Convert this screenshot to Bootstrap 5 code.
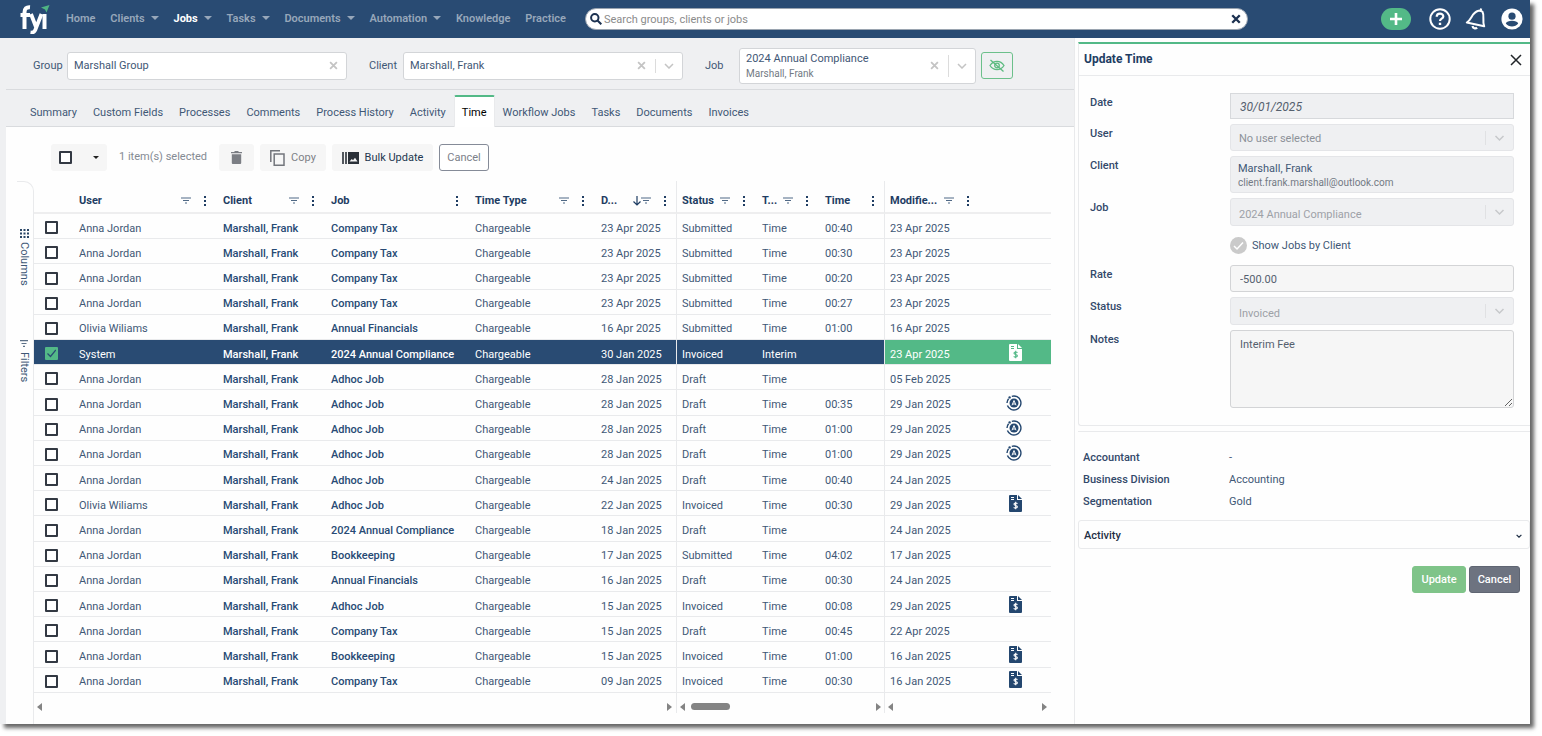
<!DOCTYPE html>
<html lang="en">
<head>
<meta charset="utf-8">
<meta name="viewport" content="width=device-width, initial-scale=1">
<title>FYI - Jobs - Time</title>
<link href="https://cdn.jsdelivr.net/npm/bootstrap@5.3.0/dist/css/bootstrap.min.css" rel="stylesheet">
<style>
  :root { --navy:#294b73; --ink:#3f5876; --deep:#1f3d63; --green:#53b987; --line:#e9eaec; --bar:#eff0f2; }
  body { font-family:Roboto,"Open Sans",sans-serif; font-size:11px; line-height:16px; color:var(--ink); background:#fff; }
  button, input, select, textarea { font-family:inherit; font-size:inherit; line-height:inherit; color:inherit; }
  svg { display:block; flex:none; }
  .window { min-height:calc(100vh - 12px); margin:0 12px 12px 0; background:#fefefe; box-shadow:4px 4px 4px rgba(0,0,0,.6); }

  .topbar { height:38px; background:var(--navy); padding:0 7px 0 20px; }
  .topbar .nav-link { font-weight:600; color:#97a7ba; padding:0; white-space:nowrap; }
  .topbar .nav-link.active { color:#fff; font-weight:700; }
  .topbar .has-menu::after { content:""; display:inline-block; margin-left:6px; vertical-align:2px; border:4px solid transparent; border-top-color:#97a7ba; border-bottom:0; }
  .main-menu { flex:0 0 535px; padding:0 19px 0 16px; }
  .search { height:22px; border-radius:11px; background:#fff; color:#1c3150; border:1px solid #9aa4b0; padding:0 6px 0 4px; }
  .search input { border:0; outline:0; background:none; min-width:0; padding:1px 2px 0; color:#555; }
  .search input::placeholder { color:#8b8b8b; opacity:1; }
  .plain-btn { border:0; background:none; padding:0; color:inherit; display:flex; align-items:center; }
  .add-btn { width:30px; height:22px; border-radius:11px; background:var(--green); justify-content:center; }
  .user-tools { flex:0 0 275px; gap:14px; color:#fff; }

  .gutter { flex:0 0 6px; background:var(--bar); }
  .context { height:52px; margin-left:6px; border-bottom:1px solid #d9dbde; padding:4px 0 0 27px; }
  .context-wrap, .tabs-wrap { background:var(--bar); }
  .pick-cap { flex:0 0 34px; }
  .pick-cap.next { margin-left:22px; }
  .picker { flex:none; height:28px; background:#fff; border:1px solid #d3d5d8; border-radius:3px; padding:0 8px 0 6px; color:#c4c4c4; }
  .picker input { border:0; outline:0; min-width:0; padding:0; color:var(--ink); background:none; }
  .picker .split { width:1px; align-self:stretch; margin:6px 8px 6px 9px; background:#dcdcdc; }
  .w-pick { width:280px; }
  .job-pick { width:237px; height:36px; line-height:15px; }
  .job-name { color:var(--ink); }
  .sub { color:#737a84; font-size:10px; }
  .hide-btn { width:32px; height:27px; margin-left:5px; border:1px solid #6cc08b; border-radius:3px; color:#5dbb80; justify-content:center; }
  .tabs { height:37px; margin-left:6px; padding-left:16px; border-bottom:1px solid #d9dbde; }
  .tabs .nav-link { height:32px; padding:10px 8px 0; margin:0 0 -1px; color:var(--ink); border:0; border-radius:0; line-height:16px; white-space:nowrap; }
  .tabs .nav-link.active { background:#fff; border:1px solid var(--line); border-top:2px solid var(--green); border-bottom:0; border-radius:2px 2px 0 0; padding:8px 7px 0; }

  .tools { padding:17px 0 0 45px; height:54px; gap:6px; }
  .tool { height:27px; border:0; border-radius:3px; background:#f6f6f6; color:#7e8186; padding:0; display:flex; align-items:center; justify-content:center; gap:6px; white-space:nowrap; }
  .tool.dark { color:#23364f; width:101px; }
  .tool.outline { background:#fff; border:1px solid #858b98; color:#7b8089; width:50px; }
  .tool.sel { width:56px; padding:0 8px; justify-content:space-between; }
  .tool.trash { width:35px; }
  .tool.copy { width:66px; }
  .sel-text { width:100px; padding:5px 0 0 6px; white-space:nowrap; color:#848a93; }
  .box { appearance:none; display:block; width:13px; height:13px; margin:0; border:2px solid #333943; border-radius:1px; background:#fff; flex:none; }
  .box:checked { border-color:var(--green); background:var(--green) url("data:image/svg+xml,%3Csvg xmlns='http://www.w3.org/2000/svg' viewBox='0 0 9 9'%3E%3Cpath d='M.5 4.5L3.5 7.5 8.8 1' fill='none' stroke='%23294b73' stroke-width='1.2'/%3E%3C/svg%3E") center/9px no-repeat; }

  .rail { flex:0 0 17px; margin-left:11px; border:1px solid var(--line); border-left:0; border-bottom:0; border-top-right-radius:10px; padding-top:47px; }
  .rail button { writing-mode:vertical-rl; gap:4px; font-size:11px; padding:0; line-height:14px; }
  .rail button + button { margin-top:54px; }
  .times { table-layout:fixed; width:100%; border-collapse:separate; border-spacing:0; }
  .times th { height:33px; padding:9px 8px 0 7px; color:var(--deep); font-weight:700; border-bottom:2px solid #eeeeef; white-space:nowrap; }
  .times td { padding:5px 0 0 7px; border-bottom:1px solid var(--line); white-space:nowrap; overflow:hidden; line-height:16px; }
  .times .pin { border-left:1px solid var(--line); padding-left:5px; }
  .times .box { margin-left:4px; }
  .times td:first-child { padding-top:3px; }
  .times .mark-cell { padding:0 9px 0 0; }
  .times .mark-cell svg { margin-left:auto; margin-right:20px; color:#24476f; }
  .times a { color:#274a74; font-weight:500; text-decoration:none; }
  .times .picked td { background:var(--navy); color:#fff; }
  .times .picked .late { background:var(--green); }
  .times .picked a, .times .picked .mark-cell svg { color:#fff; }
  .c-box{width:38px}.c-client{width:108px}.c-job{width:144px}.c-type{width:126px}.c-date{width:82px}
  .c-status{width:79px}.c-kind{width:63px}.c-time{width:66px}.c-mod{width:95px}.c-icon{width:72px}
  .head-in { display:flex; align-items:center; }
  .head-in .menu-dots { margin-left:11px; }
  .scrolls { height:20px; margin-bottom:11px; color:#848484; }
  .scrolls > div { display:flex; align-items:center; justify-content:space-between; padding:7px 4px 0 3px; }
  .scrolls .mid { width:208px; border-left:1px solid var(--line); padding-right:3px; }
  .scrolls .end { width:167px; border-left:1px solid var(--line); }
  .thumb { width:39px; height:7px; border-radius:4px; background:#848484; margin:0 auto 0 5px; }
  .table-zone { margin-right:23px; }

  .side { flex:0 0 456px; border-left:1px solid var(--line); padding:4px 0 0 3px; }
  .side-card { border-top:2px solid var(--green); border-left:1px solid var(--line); border-bottom:1px solid var(--line); border-bottom-left-radius:3px; }
  .side-head { height:32px; padding:0 8px 0 5px; border-bottom:1px solid var(--line); }
  .side-head h2 { font-size:12px; font-weight:700; color:var(--deep); margin:0; }
  .fields { display:grid; grid-template-columns:140px 1fr; gap:5px 0; padding:17px 16px 17px 11px; }
  .fields .cap { font-weight:500; color:#33496a; line-height:20px; }
  .fld { width:100%; height:27px; display:block; border:1px solid #e4e5e8; border-radius:3px; background:var(--bar); padding:2px 9px 0; color:#55606e; opacity:1; }
  .fld.date { height:26px; font-style:italic; border:1px solid #d7d9dc; border-radius:0; font-size:12px; }
  .fld.soft { background:#f6f6f6; border-color:#d3d4d6; }
  select.fld { appearance:none; padding:2px 8px 0; color:#8d9299; background:var(--bar) url("data:image/svg+xml,%3Csvg xmlns='http://www.w3.org/2000/svg' width='28' height='14'%3E%3Cpath d='M.5 0V14' stroke='%23e0e1e3'/%3E%3Cpath d='M10.500 5L14.500 9 18.500 5' fill='none' stroke='%23c6c8cb' stroke-width='1.500'/%3E%3C/svg%3E") right center no-repeat; }
  .fld.tall { height:28px; padding-top:5px; color:#9da1a7; }
  .fld.person { height:37px; padding:5px 7px 0; line-height:14px; color:var(--ink); }
  textarea.fld { height:78px; padding:6px 9px; resize:vertical; }
  .check-row { height:29px; gap:5px; }
  .round-check { appearance:none; width:17px; height:17px; margin:0; border-radius:50%; background:#cacaca url("data:image/svg+xml,%3Csvg xmlns='http://www.w3.org/2000/svg' viewBox='0 0 17 17'%3E%3Cpath d='M4 9L7 12 13 5.500' fill='none' stroke='white' stroke-width='1.500'/%3E%3C/svg%3E") center no-repeat; }
  .facts { margin:5px 0 0; padding:15px 5px 7px; border-top:1px solid var(--line); display:grid; grid-template-columns:146px 1fr; line-height:22px; }
  .facts dt { font-weight:500; color:#33496a; }
  .facts dd { margin:0; }
  .activity { height:29px; border:1px solid var(--line); border-radius:3px; padding:2px 7px 0 5px; font-weight:500; color:#1f2f45; width:100%; justify-content:space-between; }
  .side-actions { gap:3px; padding:17px 10px 0; }
  .act { height:27px; width:54px; border:1px solid #7fc489; border-radius:3px; background:#7fc489; color:#fff; padding:0; font-weight:500; }
  .act.grey { background:#6d7380; border-color:#5f6572; width:51px; }
</style>
</head>
<body>
<svg width="0" height="0" class="position-absolute" aria-hidden="true">
  <symbol id="i-filter" viewBox="0 0 10 8"><path d="M0 1h10M2 3.500h6M4 6h2" stroke="#4f6885" stroke-width="1.200"/></symbol>
  <symbol id="i-dots" viewBox="0 0 6 10"><path d="M2 0h2v2H2zM2 4h2v2H2zM2 8h2v2H2z" fill="currentColor"/></symbol>
  <symbol id="i-down" viewBox="0 0 8 10"><path d="M4 0v9M.5 5.500L4 9l3.500-3.500" fill="none" stroke="currentColor" stroke-width="1.200"/></symbol>
  <symbol id="i-x" viewBox="0 0 8 8"><path d="M1 1l6 6M7 1L1 7" stroke="currentColor" stroke-width="1.600"/></symbol>
  <symbol id="i-chev" viewBox="0 0 10 6"><path d="M1 1l4 4 4-4" fill="none" stroke="currentColor" stroke-width="1.500"/></symbol>
  <symbol id="i-left" viewBox="0 0 6 8"><path d="M5 0v8L0 4z" fill="currentColor"/></symbol>
  <symbol id="i-right" viewBox="0 0 6 8"><path d="M1 0v8l5-4z" fill="currentColor"/></symbol>
  <symbol id="i-bill" viewBox="0 0 13 17"><path fill-rule="evenodd" fill="currentColor" d="M1 0h7v5h5v11a1 1 0 0 1-1 1H1a1 1 0 0 1-1-1V1a1 1 0 0 1 1-1zM9 0l4 4H9zM2 2v1h3V2zM2 4v1h3V4z"/><path d="M8.500 8.600C7.500 7.600 5 7.900 5 9.300c0 1.500 3.400.9 3.400 2.500 0 1.500-2.700 1.600-3.700.5M6.700 6.800v7.400" fill="none" stroke="#fff" stroke-width="1.100"/></symbol>
  <symbol id="i-bill-on" viewBox="0 0 13 17"><path fill-rule="evenodd" fill="currentColor" d="M1 0h7v5h5v11a1 1 0 0 1-1 1H1a1 1 0 0 1-1-1V1a1 1 0 0 1 1-1zM9 0l4 4H9zM2 2v1h3V2zM2 4v1h3V4z"/><path d="M8.500 8.600C7.500 7.600 5 7.900 5 9.300c0 1.500 3.400.9 3.400 2.500 0 1.500-2.700 1.600-3.700.5M6.700 6.800v7.400" fill="none" stroke="#53b987" stroke-width="1.100"/></symbol>
  <symbol id="i-auto" viewBox="0 0 16 16"><path d="M5.800 1.300A7 7 0 1 1 1.400 10.500M1 8A7 7 0 0 1 2.600 3.800" fill="none" stroke="currentColor" stroke-width="1.400"/><circle cx="3.600" cy="2.400" r="1.200" fill="currentColor"/><circle cx="8" cy="8" r="4.500" fill="currentColor"/><path d="M6 10.300L8 5.500l2 4.800M6.800 9h2.400" fill="none" stroke="#fff" stroke-width="1"/></symbol>
</svg>

<div class="window d-flex flex-column">
  <header class="topbar d-flex align-items-center">
    <a href="#" aria-label="fyi home">
      <svg width="30" height="30" viewBox="0 0 30 30" fill="none" stroke="#fff" stroke-width="4"><path d="M4.500 25V8.500C4.500 4.500 6.500 3 10 3.300M.5 11H10"/><path d="M11 10l5 13M21.500 10L16 24c-1 3.500-2 5-5.500 4.500" stroke-width="3.800"/><path d="M24.500 10v15"/><path d="M21 3.500L29.500 1 26.500 8.500 25 5.500z" fill="#4fb583" stroke="none"/></svg>
    </a>
    <nav class="main-menu nav flex-nowrap justify-content-between" aria-label="Main">
      <a class="nav-link" href="#">Home</a>
      <a class="nav-link has-menu" href="#">Clients</a>
      <a class="nav-link has-menu active" href="#">Jobs</a>
      <a class="nav-link has-menu" href="#">Tasks</a>
      <a class="nav-link has-menu" href="#">Documents</a>
      <a class="nav-link has-menu" href="#">Automation</a>
      <a class="nav-link" href="#">Knowledge</a>
      <a class="nav-link" href="#">Practice</a>
    </nav>
    <form class="search d-flex align-items-center flex-fill" role="search">
      <svg width="12" height="12" viewBox="0 0 12 12" fill="none" stroke="currentColor" stroke-width="2"><circle cx="4.800" cy="4.800" r="3.700"/><path d="M7.500 7.500L11.300 11.300"/></svg>
      <input class="flex-fill" type="text" placeholder="Search groups, clients or jobs" aria-label="Search groups, clients or jobs">
      <button type="button" class="plain-btn" aria-label="Clear search"><svg width="10" height="10" viewBox="0 0 8 8"><path d="M1 1l6 6M7 1L1 7" stroke="currentColor" stroke-width="1.900"/></svg></button>
    </form>
    <div class="user-tools d-flex align-items-center justify-content-end">
      <button class="plain-btn add-btn me-1" aria-label="Add"><svg width="12" height="12" viewBox="0 0 12 12"><path d="M6 0v12M0 6h12" stroke="#fff" stroke-width="2.600"/></svg></button>
      <button class="plain-btn" aria-label="Help"><svg width="22" height="22" viewBox="0 0 22 22" fill="none" stroke="#fff"><circle cx="11" cy="11" r="9.700" stroke-width="2"/><path d="M7.700 8.800c0-4.200 6.600-4 6.600-.4 0 2.300-3.300 2.200-3.300 4.600" stroke-width="2.200"/><path d="M11 14.700v2.300" stroke-width="2.400"/></svg></button>
      <button class="plain-btn" aria-label="Notifications"><svg width="22" height="22" viewBox="0 0 22 22" fill="none" stroke="#fff" stroke-width="2"><path d="M1.800 14.500C7 11.500 6.500 4.500 13.500 2.800c1.500-.2 3 .2 4 1 2.300 4.200-.5 9.200 1.700 14.500z" stroke-linejoin="round"/><path d="M7.500 18c.4 2.300 3 3.200 4.600 1.600M15.500 2.500l.7-2" stroke-width="2.200"/></svg></button>
      <button class="plain-btn" aria-label="Account"><svg width="22" height="22" viewBox="0 0 22 22"><circle cx="11" cy="11" r="10.600" fill="#fff"/><circle cx="11" cy="8.200" r="3.600" fill="#294b73"/><path d="M4.800 15.500c1-3.600 11.400-3.600 12.400 0-2.800 4-9.600 4-12.400 0z" fill="#294b73"/></svg></button>
    </div>
  </header>

  <div class="d-flex flex-fill">
    <main class="d-flex flex-column flex-fill">
      <div class="context-wrap">
        <div class="context d-flex align-items-center">
          <label for="group" class="pick-cap">Group</label>
          <div class="picker w-pick d-flex align-items-center"><input id="group" class="flex-fill" value="Marshall Group"><button class="plain-btn" aria-label="Clear group"><svg width="9" height="9"><use href="#i-x"/></svg></button></div>
          <label for="client" class="pick-cap next">Client</label>
          <div class="picker w-pick d-flex align-items-center"><input id="client" class="flex-fill" value="Marshall, Frank"><button class="plain-btn" aria-label="Clear client"><svg width="9" height="9"><use href="#i-x"/></svg></button><span class="split"></span><button class="plain-btn" aria-label="Open clients"><svg width="10" height="6"><use href="#i-chev"/></svg></button></div>
          <label for="job" class="pick-cap next">Job</label>
          <div class="picker job-pick d-flex align-items-center"><button id="job" class="plain-btn flex-fill flex-column align-items-start"><span class="job-name">2024 Annual Compliance</span><span class="sub">Marshall, Frank</span></button><button class="plain-btn" aria-label="Clear job"><svg width="9" height="9"><use href="#i-x"/></svg></button><span class="split"></span><button class="plain-btn" aria-label="Open jobs"><svg width="10" height="6"><use href="#i-chev"/></svg></button></div>
          <button class="plain-btn hide-btn" aria-label="Hide"><svg width="16" height="13" viewBox="0 0 16 13" fill="none" stroke="currentColor" stroke-width="1.300"><path d="M1 6.500C4.500 1 11.500 1 15 6.500 11.500 12 4.500 12 1 6.500z"/><circle cx="8" cy="6.500" r="2.300"/><path d="M1.500 1l13 11.500"/></svg></button>
        </div>
      </div>
      <div class="tabs-wrap">
        <nav class="tabs nav nav-tabs flex-nowrap align-items-end" aria-label="Job sections">
          <a class="nav-link" href="#">Summary</a><a class="nav-link" href="#">Custom Fields</a><a class="nav-link" href="#">Processes</a><a class="nav-link" href="#">Comments</a><a class="nav-link" href="#">Process History</a><a class="nav-link" href="#">Activity</a><a class="nav-link active" href="#" aria-current="page">Time</a><a class="nav-link" href="#">Workflow Jobs</a><a class="nav-link" href="#">Tasks</a><a class="nav-link" href="#">Documents</a><a class="nav-link" href="#">Invoices</a>
        </nav>
      </div>
      <div class="d-flex flex-fill">
        <div class="gutter"></div>
        <div class="d-flex flex-column flex-fill">
          <div class="tools d-flex">
            <div class="tool sel"><input type="checkbox" class="box" aria-label="Select all"><button class="plain-btn" aria-label="Selection menu"><svg width="6" height="3" viewBox="0 0 6 3"><path d="M0 0h6L3 3z" fill="#222"/></svg></button></div>
            <span class="sel-text">1 item(s) selected</span>
            <button class="tool trash" aria-label="Delete"><svg width="11" height="13" viewBox="0 0 11 13" fill="#7b7e84"><path d="M0 1h3l1-1h3l1 1h3v1.300H0zM.8 3.200h9.400V12a1 1 0 0 1-1 1H1.800a1 1 0 0 1-1-1z"/></svg></button>
            <button class="tool copy"><svg width="15" height="16" viewBox="0 0 15 16" fill="none" stroke="#73767c" stroke-width="1.500"><path d="M.8 12V.8H10"/><path d="M4.200 4h9.800v11.200H4.200z"/></svg>Copy</button>
            <button class="tool dark"><svg width="17" height="12" viewBox="0 0 17 12"><path d="M1 0v12M4 0v12" stroke="#2a3038" stroke-width="1.600"/><path fill="#2a3038" fill-rule="evenodd" d="M6 0h11v12H6zM7.500 9.500h8L13 5.800l-2 2.500L9.800 7z"/></svg>Bulk Update</button>
            <button class="tool outline">Cancel</button>
          </div>
          <div class="d-flex flex-fill">
            <div class="rail">
              <button class="plain-btn"><svg width="9" height="9" viewBox="0 0 9 9" fill="#2b4666"><path d="M0 0h2v2H0zM3.500 0h2v2h-2zM7 0h2v2H7zM0 3.500h2v2H0zM3.500 3.500h2v2h-2zM7 3.500h2v2H7zM0 7h2v2H0zM3.500 7h2v2h-2zM7 7h2v2H7z"/></svg>Columns</button>
              <button class="plain-btn"><svg width="8" height="8" viewBox="0 0 8 8"><path d="M0 .7h8M1.500 3.500h5M3 6.300h2" stroke="#5c7087" stroke-width="1.200"/></svg>Filters</button>
            </div>
            <div class="table-zone d-flex flex-column flex-fill">
              <div class="d-flex flex-fill">
              <table class="times">
                <colgroup><col class="c-box"><col><col class="c-client"><col class="c-job"><col class="c-type"><col class="c-date"><col class="c-status"><col class="c-kind"><col class="c-time"><col class="c-mod"><col class="c-icon"></colgroup>
                <thead><tr id="heads"></tr></thead>
                <tbody id="rows"></tbody>
              </table>
              </div>
              <div class="scrolls d-flex">
                <div class="flex-fill"><svg width="6" height="8"><use href="#i-left"/></svg><svg width="6" height="8"><use href="#i-right"/></svg></div>
                <div class="mid"><svg width="6" height="8"><use href="#i-left"/></svg><span class="thumb"></span><svg width="6" height="8"><use href="#i-right"/></svg></div>
                <div class="end"><svg width="6" height="8"><use href="#i-left"/></svg><svg width="6" height="8"><use href="#i-right"/></svg></div>
              </div>
            </div>
          </div>
        </div>
      </div>
    </main>

    <aside class="side">
      <section class="side-card">
        <div class="side-head d-flex align-items-center justify-content-between"><h2>Update Time</h2><button class="plain-btn text-dark" aria-label="Close"><svg width="12" height="12" viewBox="0 0 12 12"><path d="M1 1l10 10M11 1L1 11" stroke="currentColor" stroke-width="1.500"/></svg></button></div>
        <form class="fields">
          <label class="cap" for="f-date">Date</label><input id="f-date" class="fld date" value="30/01/2025" disabled>
          <label class="cap" for="f-user">User</label><select id="f-user" class="fld" disabled><option>No user selected</option></select>
          <span class="cap">Client</span><div class="fld person"><div>Marshall, Frank</div><div class="sub">client.frank.marshall@outlook.com</div></div>
          <label class="cap" for="f-job">Job</label><select id="f-job" class="fld tall" disabled><option>2024 Annual Compliance</option></select>
          <span></span><div class="check-row d-flex align-items-center"><input id="f-show" type="checkbox" class="round-check" checked disabled><label for="f-show">Show Jobs by Client</label></div>
          <label class="cap" for="f-rate">Rate</label><input id="f-rate" class="fld soft" value="-500.00" disabled>
          <label class="cap" for="f-status">Status</label><select id="f-status" class="fld tall" disabled><option>Invoiced</option></select>
          <label class="cap" for="f-notes">Notes</label><textarea id="f-notes" class="fld soft" disabled>Interim Fee</textarea>
        </form>
      </section>
      <dl class="facts"><dt>Accountant</dt><dd>-</dd><dt>Business Division</dt><dd>Accounting</dd><dt>Segmentation</dt><dd>Gold</dd></dl>
      <button class="plain-btn activity">Activity<svg width="6" height="4" viewBox="0 0 10 6"><path d="M1 1l4 4 4-4" fill="none" stroke="currentColor" stroke-width="2"/></svg></button>
      <div class="side-actions d-flex justify-content-end"><button class="act">Update</button><button class="act grey">Cancel</button></div>
    </aside>
  </div>
</div>

<script src="https://cdn.jsdelivr.net/npm/bootstrap@5.3.0/dist/js/bootstrap.bundle.min.js"></script>
<script>
  const icon = (id, w, h) => `<svg width="${w}" height="${h}"><use href="#${id}"/></svg>`;
  // title, has filter, pinned group start, sorted
  const heads = [['User',1],['Client',1],['Job',0],['Time Type',1],['D...',1,0,1],['Status',1,1],['T...',1],['Time',0],['Modifie...',1,1]];
  document.getElementById('heads').innerHTML = '<th></th>' + heads.map(([t, f, pin, sort]) =>
    `<th class="${pin ? 'pin' : ''}"><div class="head-in"><span class="me-auto">${t}</span>${sort ? icon('i-down', 8, 10) : ''}${f ? icon('i-filter', 10, 8) : ''}<span class="menu-dots">${icon('i-dots', 6, 10)}</span></div></th>`).join('') + '<th></th>';

  const rows = [
    ['Anna Jordan','Company Tax','23 Apr 2025','Submitted','00:40','23 Apr 2025',''],
    ['Anna Jordan','Company Tax','23 Apr 2025','Submitted','00:30','23 Apr 2025',''],
    ['Anna Jordan','Company Tax','23 Apr 2025','Submitted','00:20','23 Apr 2025',''],
    ['Anna Jordan','Company Tax','23 Apr 2025','Submitted','00:27','23 Apr 2025',''],
    ['Olivia Wiliams','Annual Financials','16 Apr 2025','Submitted','01:00','16 Apr 2025',''],
    ['System','2024 Annual Compliance','30 Jan 2025','Invoiced','','23 Apr 2025','bill-on'],
    ['Anna Jordan','Adhoc Job','28 Jan 2025','Draft','','05 Feb 2025',''],
    ['Anna Jordan','Adhoc Job','28 Jan 2025','Draft','00:35','29 Jan 2025','auto'],
    ['Anna Jordan','Adhoc Job','28 Jan 2025','Draft','01:00','29 Jan 2025','auto'],
    ['Anna Jordan','Adhoc Job','28 Jan 2025','Draft','01:00','29 Jan 2025','auto'],
    ['Anna Jordan','Adhoc Job','24 Jan 2025','Draft','00:40','24 Jan 2025',''],
    ['Olivia Wiliams','Adhoc Job','22 Jan 2025','Invoiced','00:30','29 Jan 2025','bill'],
    ['Anna Jordan','2024 Annual Compliance','18 Jan 2025','Draft','','24 Jan 2025',''],
    ['Anna Jordan','Bookkeeping','17 Jan 2025','Submitted','04:02','17 Jan 2025',''],
    ['Anna Jordan','Annual Financials','16 Jan 2025','Draft','00:30','24 Jan 2025',''],
    ['Anna Jordan','Adhoc Job','15 Jan 2025','Invoiced','00:08','29 Jan 2025','bill'],
    ['Anna Jordan','Company Tax','15 Jan 2025','Draft','00:45','22 Apr 2025',''],
    ['Anna Jordan','Bookkeeping','15 Jan 2025','Invoiced','01:00','16 Jan 2025','bill'],
    ['Anna Jordan','Company Tax','09 Jan 2025','Invoiced','00:30','16 Jan 2025','bill']
  ];
  document.getElementById('rows').innerHTML = rows.map(([user, job, date, status, time, mod, mark]) => {
    const on = user === 'System';
    const size = mark === 'auto' ? [16, 16] : [13, 17];
    return `<tr class="${on ? 'picked' : ''}"><td><input type="checkbox" class="box" aria-label="Select row"${on ? ' checked' : ''}></td>
      <td>${user}</td><td><a href="#">Marshall, Frank</a></td><td><a href="#">${job}</a></td><td>Chargeable</td><td>${date}</td>
      <td class="pin">${status}</td><td>${on ? 'Interim' : 'Time'}</td><td>${time}</td><td class="pin late">${mod}</td>
      <td class="mark-cell late">${mark ? icon('i-' + mark, ...size) : ''}</td></tr>`;
  }).join('');
</script>
</body>
</html>
